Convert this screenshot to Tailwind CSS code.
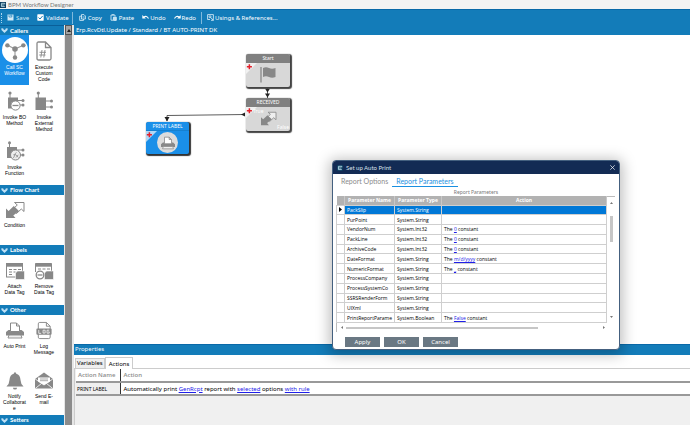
<!DOCTYPE html>
<html lang="en">
<head>
<meta charset="utf-8">
<title>BPM Workflow Designer</title>
<script src="https://cdn.jsdelivr.net/npm/@tailwindcss/browser@4"></script>
</head>
<body class="h-screen overflow-hidden bg-white font-['Noto_Sans','Open_Sans',sans-serif] text-[6px] leading-[8px] text-black">
<svg class="hidden">
  <symbol id="chev" viewBox="0 0 8 6"><path d="M0.3 0.4 2.2 0.4 4 2.4 5.8 0.4 7.7 0.4 7.7 2.3 4 6 0.3 2.3Z" fill="#bfe0f5"/><path d="M2.2 0.4 4 2.4 5.8 0.4" fill="none" stroke="#137cba" stroke-width=".6"/></symbol>
  <symbol id="logo" viewBox="0 0 6 6"><rect width="6" height="6" fill="#0b3a5c"/><path d="M4.8 1.3H1.4v3.3h3.4M1.4 3h3M4.8 1.3v1" fill="none" stroke="#c8ecf8" stroke-width=".8"/></symbol>
  <symbol id="callsc" viewBox="0 0 28 28"><circle cx="14" cy="14" r="14" fill="#fff"/><g stroke="#999" stroke-width="1.2"><path d="M6 9 14 13M14 13 23 9M14 13V22"/></g><g fill="#888"><circle cx="5.8" cy="9" r="2.4"/><circle cx="14" cy="13" r="3"/><circle cx="23" cy="9" r="2.4"/><circle cx="14" cy="22" r="2.4"/></g></symbol>
  <symbol id="code" viewBox="0 0 20 20"><path d="M3 2.5Q3 1 4.500 1H11.500L17 6.500V17.500Q17 19 15.500 19H4.500Q3 19 3 17.500ZM11.500 1V6.500H17" fill="#fff" stroke="#888" stroke-width="1.300"/><path d="M8 9 6.800 16.500M11 9 9.800 16.500M5.500 11.300H12M5.200 14H11.500" stroke="#888" stroke-width=".9"/></symbol>
  <symbol id="ext" viewBox="0 0 20 20"><g fill="#888"><rect x="1.500" y="6.500" width="10.500" height="12.500"/><circle cx="4.300" cy="2" r="1.600"/><circle cx="17.500" cy="10" r="1.500"/><circle cx="17.500" cy="16" r="1.500"/></g><path d="M4.300 2V7M12 10H17M12 16H17" stroke="#888"/></symbol>
  <symbol id="bo" viewBox="0 0 20 20"><g fill="#888"><rect x="3" y="6.500" width="10" height="11"/><circle cx="5" cy="2" r="1.600"/><circle cx="18" cy="9.500" r="1.500"/><circle cx="18" cy="14" r="1.500"/></g><path d="M5 2V7M12 9.500H17M12 14H17" stroke="#888"/><circle cx="10.500" cy="14.500" r="4.600" fill="#fff" stroke="#888"/><path d="M7.500 14.500h6" stroke="#888" stroke-width="1.300"/></symbol>
  <symbol id="fn" viewBox="0 0 20 20"><g fill="#888"><rect x="2" y="6" width="10" height="11"/><circle cx="4.500" cy="1.800" r="1.500"/><circle cx="18" cy="9" r="1.500"/><circle cx="18" cy="14" r="1.500"/></g><path d="M4.500 2V7M12 9H17M12 14H17" stroke="#888"/><circle cx="10.500" cy="14" r="5" fill="#eee" stroke="#888"/><path d="M8 17Q9 17 9.500 14.500T11.500 11.500M8.300 13.800H11M11 13.800 13.300 16.500M13.300 13.800 11 16.500" fill="none" stroke="#888" stroke-width=".8"/></symbol>
  <symbol id="cond" viewBox="0 0 20 18"><path d="M9.500 1.500H19V10.500L16.300 8 11.500 12.500 7.500 8.500 12.300 4Z" fill="#fff" fill-opacity=".6" stroke="#888"/><path d="M1 7.500 3.600 10 8.800 5 14 10 8.300 14.500 10.500 17H1Z" fill="#888"/></symbol>
  <symbol id="tag" viewBox="0 0 20 18"><rect x="1.500" y="1.500" width="16" height="13.500" fill="#fff" stroke="#888"/><path d="M1 3.200H18" stroke="#888" stroke-width="3"/><path d="M4 7.500h3M8.500 7.500h3M13 7.500h3M4 10h3M8.500 10h2M4 12.500h3" stroke="#888"/><path d="M10.500 11 12.500 9H19.500V17.500H10.500Z" fill="#888" stroke="#fff" stroke-width=".6"/></symbol>
  <symbol id="untag" viewBox="0 0 20 18"><path d="M1.500 10V1.500H17.500V9" fill="#fff" stroke="#888"/><path d="M1 3.200H18" stroke="#888" stroke-width="3"/><path d="M4 7h3M8.500 7h3M13 7h3" stroke="#888"/><path d="M10.500 11 12.500 9H19.500V17.500H10.500Z" fill="#888" stroke="#fff" stroke-width=".6"/><circle cx="6" cy="13" r="3.800" fill="#fff" stroke="#888" stroke-width="1.300"/><path d="M3.500 13h5" stroke="#888" stroke-width="1.300"/></symbol>
  <symbol id="print" viewBox="0 0 20 18"><path d="M1 14V10.500L3.500 8.500H16.500L19 10.500V14Z" fill="#888"/><path d="M5.500 10V1.500H11.500L14.500 4.500V10ZM11.500 1.500V4.500H14.500" fill="#fff" stroke="#888"/><path d="M4 13.500H16L17 16.500H3Z" fill="#eee" stroke="#888" stroke-width=".9"/></symbol>
  <symbol id="log" viewBox="0 0 18 20"><path d="M3 3Q3 1.500 4.500 1.500H11.500L15.500 5.500V17Q15.500 18.500 14 18.500H4.500Q3 18.500 3 17ZM11.500 1.500V5.500H15.500" fill="#fff" stroke="#888"/><rect x="1" y="8" width="16" height="6.500" rx="1" fill="#888"/><path d="M3.500 9.500V13H6M8 9.700h2.200v3H8ZM14.500 9.700H12.200v3.100h2.300V11.400H13.500" fill="none" stroke="#fff" stroke-width=".8"/></symbol>
  <symbol id="bell" viewBox="0 0 20 20"><path d="M10 1.200Q11.300 1.200 11.300 2.800 15.500 3.800 15.800 9.500 16 14 19 16.200H1Q4 14 4.200 9.500 4.500 3.800 8.700 2.800 8.700 1.200 10 1.200Z" fill="#888"/><path d="M7.800 17.500h4.400Q12 19.600 10 19.600T7.800 17.500Z" fill="#888"/></symbol>
  <symbol id="mail" viewBox="0 0 20 18"><path d="M1 7.500 10 1 19 7.500V17H1Z" fill="#888"/><path d="M4 6H16V10L10 13.500 4 10Z" fill="#fff"/><path d="M1.200 7.500 10 13.500 18.800 7.500M1.200 17 7.500 12M18.800 17 12.500 12" fill="none" stroke="#fff" stroke-width=".8"/><path d="M6 7.500h8M6 9.200h8" stroke="#888" stroke-width=".7"/></symbol>
  <symbol id="flag" viewBox="0 0 16 17"><path d="M1 1V16.500" stroke="#888" stroke-width="1.300"/><path d="M3 2Q6 .5 9 2T15.500 2V11Q12 12.500 9 11T3 11Z" fill="#888"/></symbol>
  <symbol id="plus" viewBox="0 0 13 13"><path d="M0 0H13L0 13Z" fill="#fff" fill-opacity=".65"/><path d="M4 1.500V7.500M1 4.500H7" stroke="#e3202b" stroke-width="1.800"/></symbol>
</svg>
<div class="flex h-full flex-col">
  <header class="flex h-[9px] shrink-0 items-center gap-[2px] bg-[#f3f3f3] text-[#777]">
    <svg class="size-[6px]"><use href="#logo"/></svg><h1 class="font-['Lato',sans-serif] leading-[8px]">BPM Workflow Designer</h1>
  </header>
  <nav class="flex h-[16px] shrink-0 items-center whitespace-nowrap border-t border-[#0969a8] bg-[#137cb9] pl-px text-white" aria-label="Toolbar">
    <span class="h-[10px] border-l border-dotted border-[#a9d3ec]"></span>
    <button class="ml-[5px] flex items-center gap-[2px] text-[#cfe5f2]"><svg class="size-[7px]" viewBox="0 0 7 7"><path d="M.5.5H6.500V6.500H.5Z" fill="#d5ebf7"/><path d="M2 .5V3H4.800V.5M3.800.5V2" fill="none" stroke="#137cb9" stroke-width=".7"/></svg>Save</button>
    <button class="ml-[8px] flex items-center gap-[2px]"><svg class="size-[7px]" viewBox="0 0 7 7"><rect x=".3" y=".3" width="6.400" height="6.400" rx=".6" fill="#fff"/><path d="M1.500 3.500 3 5 5.600 2" fill="none" stroke="#137cb9"/></svg>Validate</button>
    <span class="ml-[3px] h-[12px] border-l border-[#7fb9dc]"></span>
    <button class="ml-[6px] flex items-center gap-[2px]"><svg class="size-[7px]" viewBox="0 0 7 7" fill="none" stroke="#e3f2fa" stroke-width=".8"><path d="M2.500.6H5L6.400 2V5H2.500Z"/><path d="M2.500 2.200H.7V6.400H4.500V5M3.500 3H5.500"/></svg>Copy</button>
    <button class="ml-[8px] flex items-center gap-[2px]"><svg class="size-[7px]" viewBox="0 0 7 7" fill="none" stroke="#e3f2fa" stroke-width=".8"><path d="M3 6.200H1V1H5V2.500M2 .8H4"/><path d="M3.400 3.200H6.300V6.400H3.400Z" fill="#bcdff2"/></svg>Paste</button>
    <button class="ml-[8px] flex items-center gap-px"><svg class="size-[7px]" viewBox="0 0 7 7"><path d="M.3 1V4.500H3.800Z" fill="#fff"/><path d="M1.800 3.200Q4.500 1 6.500 4.500" fill="none" stroke="#fff" stroke-width="1.100"/></svg>Undo</button>
    <button class="ml-[8px] flex items-center gap-px"><svg class="size-[7px]" viewBox="0 0 7 7"><path d="M6.700 1V4.500H3.200Z" fill="#fff"/><path d="M5.200 3.200Q2.500 1 .5 4.500" fill="none" stroke="#fff" stroke-width="1.100"/></svg>Redo</button>
    <span class="ml-[5px] h-[12px] border-l border-[#7fb9dc]"></span>
    <button class="ml-[5px] flex items-center gap-px"><svg class="size-[7px]" viewBox="0 0 7 7" fill="none" stroke="#e3f2fa" stroke-width=".8"><path d="M.6.6H6.400V4M.6.6V5.500H3"/><circle cx="3" cy="2.800" r="1"/><path d="M3.700 3.500 6.400 6.400M4 6.300H6.300V4"/></svg>Usings &amp; References...</button>
  </nav>
  <div class="flex min-h-0 flex-1">
    <aside class="flex w-[74px] shrink-0 bg-[#137cb9]">
      <div class="w-[64px] bg-white text-center font-['Liberation_Sans',sans-serif] text-[5px] leading-[6px]">
        <h2 class="flex h-[10px] items-center gap-[2px] border-t border-[#0a5f99] bg-[#137cb9] pl-px font-['Lato',sans-serif] text-[6px] font-bold text-white"><svg class="h-[5px] w-[7px]"><use href="#chev"/></svg>Callers</h2>
        <div class="grid grid-cols-[29px_30px] auto-rows-[50px] [&>button]:flex [&>button]:flex-col [&>button]:items-center [&>button]:gap-[3px] [&>button]:pt-[6px] [&_svg]:h-[20px] [&_svg]:w-[20px] [&_svg]:shrink-0">
          <button class="gap-px! bg-[#1a8fe8] pt-[2px]! text-white"><svg class="size-[26px]!"><use href="#callsc"/></svg>Call SC<br>Workflow</button>
          <button><svg><use href="#code"/></svg>Execute<br>Custom<br>Code</button>
          <button><svg><use href="#bo"/></svg>Invoke BO<br>Method</button>
          <button><svg><use href="#ext"/></svg>Invoke<br>External<br>Method</button>
          <button><svg><use href="#fn"/></svg>Invoke<br>Function</button>
        </div>
        <h2 class="flex h-[10px] items-center gap-[2px] bg-[#137cb9] pl-px font-['Lato',sans-serif] text-[6px] font-bold text-white"><svg class="h-[5px] w-[7px]"><use href="#chev"/></svg>Flow Chart</h2>
        <div class="grid grid-cols-[29px_30px] auto-rows-[50px] [&>button]:flex [&>button]:flex-col [&>button]:items-center [&>button]:gap-[3px] [&>button]:pt-[6px] [&_svg]:h-[18px] [&_svg]:w-[20px] [&_svg]:shrink-0">
          <button><svg><use href="#cond"/></svg>Condition</button>
        </div>
        <h2 class="flex h-[10px] items-center gap-[2px] bg-[#137cb9] pl-px font-['Lato',sans-serif] text-[6px] font-bold text-white"><svg class="h-[5px] w-[7px]"><use href="#chev"/></svg>Labels</h2>
        <div class="grid grid-cols-[29px_30px] auto-rows-[50px] [&>button]:flex [&>button]:flex-col [&>button]:items-center [&>button]:gap-[3px] [&>button]:pt-[7px] [&_svg]:h-[18px] [&_svg]:w-[20px] [&_svg]:shrink-0">
          <button><svg><use href="#tag"/></svg>Attach<br>Data Tag</button>
          <button><svg><use href="#untag"/></svg>Remove<br>Data Tag</button>
        </div>
        <h2 class="flex h-[10px] items-center gap-[2px] bg-[#137cb9] pl-px font-['Lato',sans-serif] text-[6px] font-bold text-white"><svg class="h-[5px] w-[7px]"><use href="#chev"/></svg>Other</h2>
        <div class="grid grid-cols-[29px_30px] auto-rows-[50px] [&>button]:flex [&>button]:flex-col [&>button]:items-center [&>button]:gap-[3px] [&>button]:pt-[6px] [&_svg]:h-[19px] [&_svg]:w-[20px] [&_svg]:shrink-0">
          <button><svg><use href="#print"/></svg>Auto Print</button>
          <button><svg><use href="#log"/></svg>Log<br>Message</button>
          <button><svg><use href="#bell"/></svg>Notify<br>Collaborat<br>e</button>
          <button><svg><use href="#mail"/></svg>Send E-<br>mail</button>
        </div>
        <h2 class="flex h-[10px] items-center gap-[2px] bg-[#137cb9] pl-px font-['Lato',sans-serif] text-[6px] font-bold text-white"><svg class="h-[5px] w-[7px]"><use href="#chev"/></svg>Setters</h2>
      </div>
      <div class="flex w-[10px] flex-col border-r-2 border-l border-[#e6e6e6] bg-[#8c8c8c]">
        <button class="flex h-[10px] items-center justify-center border border-[#555] bg-[#a3a3a3]" aria-label="Scroll up"><svg class="h-[3px] w-[4px]" viewBox="0 0 4 3"><path d="M0 3 2 0 4 3Z" fill="#222"/></svg></button>
      </div>
    </aside>
    <main class="flex min-w-0 flex-1 flex-col">
      <div class="h-[10px] shrink-0 bg-[#137cb9] pl-[2px] leading-[10px] text-white">Erp.RcvDtl.Update / Standard / BT AUTO-PRINT DK</div>
      <section class="relative min-h-0 flex-1 bg-white" aria-label="Workflow canvas">
        <svg class="absolute left-0 top-0 h-[130px] w-[230px]" viewBox="74 35 230 130"><g fill="none" stroke="#333" stroke-width=".8"><path d="M267.500 88V98M245 114.500 167 115.500V121"/></g><path d="M265 88.500h5l-2.500 4ZM265 93.500h5l-2.500 4ZM245 112.500v4l-4-2ZM164.500 117h5l-2.500 4.500Z" fill="#222"/></svg>
        <div class="absolute left-[172px] top-[19px] h-[33px] w-[44px] rounded-[2px] bg-[#d8d8d8] text-center shadow-[1px_1px_1px_1px_#444]">
          <div class="h-[9px] rounded-t-[2px] bg-[#808080] text-[5px] leading-[9px] text-white">Start</div>
          <svg class="absolute left-0 top-[9px] size-[11px]"><use href="#plus"/></svg>
          <svg class="mx-auto mt-[3px] h-[17px] w-[16px]"><use href="#flag"/></svg>
        </div>
        <div class="absolute left-[172px] top-[63px] h-[33px] w-[44px] rounded-[2px] bg-[#d8d8d8] text-center shadow-[1px_1px_1px_1px_#444]">
          <div class="h-[9px] rounded-t-[2px] bg-[#808080] text-[5px] leading-[9px] text-white">RECEIVED</div>
          <svg class="absolute left-0 top-[9px] size-[11px]"><use href="#plus"/></svg>
          <svg class="mx-auto mt-[4px] h-[15px] w-[17px]"><use href="#cond"/></svg>
          <span class="absolute left-[7px] top-[10px] text-[5px] leading-[6px] text-white">True</span>
          <span class="absolute right-px bottom-px text-[5px] leading-[6px] text-white">False</span>
        </div>
        <div class="absolute left-[72px] top-[87px] h-[32px] w-[43px] rounded-[2px] bg-[#1a8fe8] text-center shadow-[1px_1px_1px_1px_#333]">
          <div class="h-[9px] border-b border-[#1580cf] text-[5px] leading-[8px] text-white">PRINT LABEL</div>
          <svg class="absolute left-0 top-[9px] size-[11px]"><use href="#plus"/></svg>
          <div class="mx-auto mt-px flex size-[21px] items-center justify-center rounded-full bg-[#dcdcdc]"><svg class="h-[14px] w-[16px]"><use href="#print"/></svg></div>
        </div>
      </section>
      <section class="flex h-[81px] shrink-0 flex-col bg-white" aria-label="Properties">
        <h2 class="h-[11px] border-t border-[#0a69a8] bg-[#137cb9] pl-px leading-[9px] text-white">Properties</h2>
        <div class="flex items-end border-b border-[#ccc] pl-px pt-[2px]" role="tablist">
          <button class="h-[10px] border border-b-0 border-[#ccc] bg-[#efefef] px-px leading-[9px]" role="tab">Variables</button>
          <button class="-mb-px h-[12px] border border-b-0 border-[#ccc] bg-white px-[3px] leading-[10px]" role="tab" aria-selected="true">Actions</button>
        </div>
        <div class="min-h-0 flex-1 border-l border-[#ccc] bg-[#f0f0f0] pl-px">
          <table class="w-full border-collapse bg-white text-left">
            <thead><tr class="h-[13px] border-b-2 border-[#999] text-[#8c8c8c]"><th class="w-[44px] whitespace-nowrap border-r border-[#333] pl-[2px] font-['Open_Sans',sans-serif] font-semibold">Action Name</th><th class="pl-[3px] font-['Open_Sans',sans-serif] font-semibold">Action</th></tr></thead>
            <tbody><tr class="h-[13px] border-b-2 border-[#999]"><td class="whitespace-nowrap border-r border-[#333] bg-[#efefef] pl-px text-[5px]">PRINT LABEL</td><td class="pl-[3px]">Automatically print <a href="#" class="text-[#2020e8] underline">GenRcpt</a> report with <a href="#" class="text-[#2020e8] underline">selected</a> options <a href="#" class="text-[#2020e8] underline">with rule</a></td></tr></tbody>
          </table>
        </div>
      </section>
    </main>
  </div>
</div>

<div role="dialog" aria-label="Set up Auto Print" class="absolute left-[332px] top-[160px] flex w-[288px] flex-col overflow-hidden rounded-[4px] border border-[#44607f] bg-white shadow-[0_2px_14px_3px_rgba(0,0,0,0.25)]">
  <div class="flex h-[13px] items-center gap-[3px] bg-[#132b54] px-[4px] font-['Lato',sans-serif] text-[#d9e0ea]"><svg class="size-[6px]"><use href="#logo"/></svg><span class="flex-1">Set up Auto Print</span>
    <button aria-label="Close"><svg class="size-[5px]" viewBox="0 0 5 5"><path d="M.3.3 4.700 4.700M4.700.3.3 4.700" stroke="#fff" stroke-width=".7"/></svg></button></div>
  <div class="flex gap-[4px] pl-[8px] pt-px font-['Lato',sans-serif] text-[7px] text-[#8c8c8c]" role="tablist">
    <button class="h-[12px] leading-[12px]" role="tab">Report Options</button>
    <button class="h-[12px] border-b border-[#1a8fe0] px-[4px] leading-[12px] text-[#1a8fe0]" role="tab" aria-selected="true">Report Parameters</button>
  </div>
  <div class="pt-px text-center text-[5px] leading-[8px] text-[#777]">Report Parameters</div>
  <div class="ml-[3px] flex">
    <table class="h-[127px] flex-1 table-fixed border-collapse whitespace-nowrap text-left font-['Open_Sans',sans-serif] text-[5px] leading-[6px] [&_td]:overflow-hidden [&_td]:border [&_td]:border-[#cfcfcf] [&_td]:py-0 [&_td]:pl-[2px] [&_a]:text-[#2020e8] [&_a]:underline [&_tbody]:leading-[8px]">
      <colgroup><col class="w-[8px]"><col class="w-[50px]"><col class="w-[47px]"><col></colgroup>
      <thead><tr class="h-[9px] bg-[#b2b2b2] text-center text-white [&>th]:border-r [&>th]:border-[#c8c8c8]"><th></th><th>Parameter Name</th><th>Parameter Type</th><th>Action</th></tr></thead>
      <tbody>
        <tr><td><svg class="h-[5px] w-[3px]" viewBox="0 0 3 5"><path d="M0 0 3 2.500 0 5Z"/></svg></td><td class="bg-[#0078d7] text-white">PackSlip</td><td class="bg-[#0078d7] text-white">System.String</td><td class="bg-[#0078d7]"></td></tr>
        <tr><td></td><td>PurPoint</td><td>System.String</td><td></td></tr>
        <tr><td></td><td>VendorNum</td><td>System.Int32</td><td>The <a href="#">0</a> constant</td></tr>
        <tr><td></td><td>PackLine</td><td>System.Int32</td><td>The <a href="#">0</a> constant</td></tr>
        <tr><td></td><td>ArchiveCode</td><td>System.Int32</td><td>The <a href="#">0</a> constant</td></tr>
        <tr><td></td><td>DateFormat</td><td>System.String</td><td>The <a href="#">m/d/yyyy</a> constant</td></tr>
        <tr><td></td><td>NumericFormat</td><td>System.String</td><td>The <a href="#">_</a> constant</td></tr>
        <tr><td></td><td>ProcessCompany</td><td>System.String</td><td></td></tr>
        <tr><td></td><td>ProcessSystemCo</td><td>System.String</td><td></td></tr>
        <tr><td></td><td>SSRSRenderForm</td><td>System.String</td><td></td></tr>
        <tr><td></td><td>UIXml</td><td>System.String</td><td></td></tr>
        <tr><td></td><td>PrintReportParame</td><td>System.Boolean</td><td>The <a href="#">False</a> constant</td></tr>
      </tbody>
    </table>
    <div class="mr-[4px] flex w-[8px] flex-col items-center border-t border-[#bbb] py-[5px]">
      <svg class="h-[2px] w-[3px]" viewBox="0 0 3 2"><path d="M0 2 1.500 0 3 2Z" fill="#777"/></svg>
      <div class="mt-[12px] h-[26px] w-[3px] bg-[#c6c6c6]"></div>
      <svg class="mt-auto h-[2px] w-[3px]" viewBox="0 0 3 2"><path d="M0 0 1.500 2 3 0Z" fill="#777"/></svg>
    </div>
  </div>
  <div class="mr-[14px] ml-[3px] flex h-[9px] items-center border-l border-[#bbb] pl-[4px]">
    <svg class="h-[3px] w-[2px]" viewBox="0 0 2 3"><path d="M2 0 0 1.500 2 3Z" fill="#777"/></svg>
    <div class="ml-[3px] h-[2px] w-[192px] bg-[#c6c6c6]"></div>
    <svg class="ml-auto h-[3px] w-[2px]" viewBox="0 0 2 3"><path d="M0 0 2 1.500 0 3Z" fill="#777"/></svg>
  </div>
  <div class="flex gap-[4px] pt-[5px] pb-[2px] pl-[12px] [&>button]:h-[10px] [&>button]:w-[35px] [&>button]:bg-[#6a7883] [&>button]:leading-[10px] [&>button]:text-white">
    <button>Apply</button><button>OK</button><button>Cancel</button>
  </div>
</div>
</body>
</html>
